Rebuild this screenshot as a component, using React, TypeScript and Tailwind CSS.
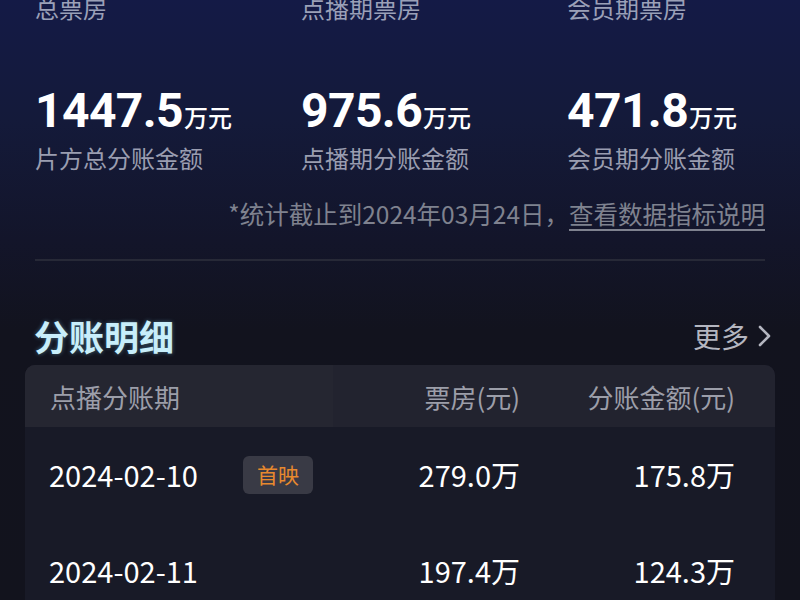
import React from "react";

const cjk = { fontFamily: '"Noto Sans CJK SC", "Noto Sans", sans-serif' };
const num = { fontFamily: 'Roboto, "Noto Sans CJK SC", sans-serif' };

const stats = [
  { label: "总票房", value: "1447.5", sub: "片方总分账金额" },
  { label: "点播期票房", value: "975.6", sub: "点播期分账金额" },
  { label: "会员期票房", value: "471.8", sub: "会员期分账金额" },
];

const rows = [
  { date: "2024-02-10", tag: true, box: "279.0万", share: "175.8万" },
  { date: "2024-02-11", tag: false, box: "197.4万", share: "124.3万" },
];

export default function App() {
  return (
    <div
      className="w-[800px] h-[600px] overflow-hidden bg-[linear-gradient(180deg,#141a46_0%,#141a3a_20%,#13152a_40%,#12131e_55%,#12131d_100%)]"
      style={cjk}
    >
      <div className="px-[35px]">
        <div className="grid grid-cols-[266px_266px_1fr] -mt-[8px]">
          {stats.map((s) => (
            <div key={s.label} className="flex flex-col">
              <div className="text-[24px] leading-[32px] text-[#9ba0b8]">{s.label}</div>
              <div className="mt-[62px] flex items-baseline h-[50px]">
                <span className="text-[48px] leading-[50px] font-bold text-white tracking-[-0.6px]" style={num}>
                  {s.value}
                </span>
                <span className="text-[24px] font-medium text-white ml-[1px]">万元</span>
              </div>
              <div className="mt-[6px] text-[24px] leading-[32px] text-[#9a9db0]">{s.sub}</div>
            </div>
          ))}
        </div>
        <div className="mt-[24px] flex justify-end text-[24.5px] leading-[32px] text-[#7f828f]">
          <span>*统计截止到2024年03月24日，</span>
          <span className="underline underline-offset-[5px] decoration-[#7f828f]">查看数据指标说明</span>
        </div>
        <div className="mt-[29px] h-[2px] bg-[#272937]" />
        <div className="mt-[53px] flex items-center justify-between h-[44px]">
          <div
            className="text-[35px] font-bold text-[#c8eefa] -ml-[1px]"
            style={{ textShadow: "0 0 4px rgba(120,200,235,0.45)" }}
          >
            分账明细
          </div>
          <div className="flex items-center text-[28px] text-[#b4b6c0] -mr-[10px]">
            更多
            <svg width="22" height="26" viewBox="0 0 22 26" className="ml-[4px]">
              <path d="M7 4 L16 13 L7 22" fill="none" stroke="#b4b6c0" strokeWidth="2.6" strokeLinecap="round" strokeLinejoin="round" />
            </svg>
          </div>
        </div>
      </div>
      <div className="mx-[25px] mt-[7px] rounded-t-[10px] bg-[#181a27] overflow-hidden">
        <div className="flex h-[62px] items-center bg-[#22232f] text-[26px] text-[#9c9ea9]">
          <div className="w-[308px] h-full flex items-center pl-[25px] bg-[#252631]">点播分账期</div>
          <div className="w-[187px] text-right">票房(元)</div>
          <div className="w-[215px] text-right">分账金额(元)</div>
        </div>
        {rows.map((r) => (
          <div key={r.date} className="flex h-[96px] items-center text-[29px] text-white">
            <div className="w-[308px] flex items-center pl-[24px]">
              <span className="w-[194px]">{r.date}</span>
              {r.tag && (
                <span className="h-[38px] w-[70px] rounded-[6px] bg-[#393a45] text-[#e8892e] text-[21px] flex items-center justify-center">
                  首映
                </span>
              )}
            </div>
            <div className="w-[187px] text-right">{r.box}</div>
            <div className="w-[215px] text-right">{r.share}</div>
          </div>
        ))}
      </div>
    </div>
  );
}
